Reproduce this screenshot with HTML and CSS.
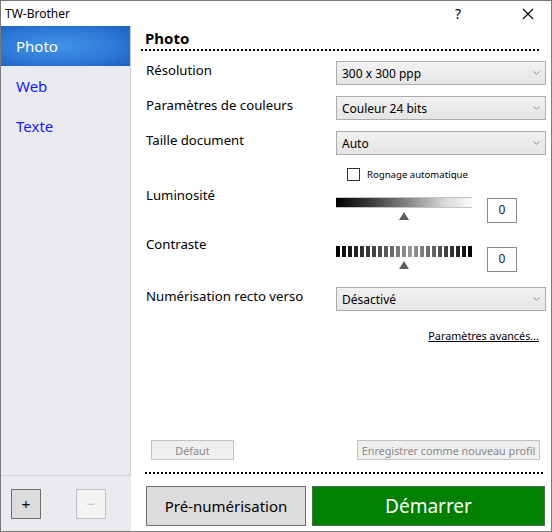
FILE: index.html
```html
<!DOCTYPE html>
<html lang="fr">
<head>
    <meta charset="UTF-8">
    <title>TW-Brother</title>
    <link rel="stylesheet" href="styles.css">
</head>
<body>

    <div class="window">
        <!-- Title bar -->
        <div class="titlebar">
            <span class="title">TW-Brother</span>
            <span class="help">?</span>
            <span class="close">
                <svg width="12" height="12" viewBox="0 0 12 12"><path d="M1 1L11 11M11 1L1 11" stroke="#000" stroke-width="1.1" fill="none"/></svg>
            </span>
        </div>

        <div class="frame">
            <!-- Profiles list -->
            <aside class="sidebar">
                <ul class="nav">
                    <li class="active">Photo</li>
                    <li>Web</li>
                    <li>Texte</li>
                </ul>
                <div class="sidebar-foot">
                    <button class="sq">+</button>
                    <button class="sq" disabled>&minus;</button>
                </div>
            </aside>

            <!-- Settings -->
            <main class="main">
                <h2 class="heading">Photo</h2>

                <div class="row first">
                    <span class="label">Résolution</span>
                    <div class="select"><span>300 x 300 ppp</span><svg class="chev" width="7" height="4" viewBox="0 0 7 4"><path d="M0.5 0.5L3.5 3.2L6.5 0.5" stroke="#888" fill="none"/></svg></div>
                </div>
                <div class="row">
                    <span class="label">Paramètres de couleurs</span>
                    <div class="select"><span>Couleur 24 bits</span><svg class="chev" width="7" height="4" viewBox="0 0 7 4"><path d="M0.5 0.5L3.5 3.2L6.5 0.5" stroke="#888" fill="none"/></svg></div>
                </div>
                <div class="row">
                    <span class="label">Taille document</span>
                    <div class="select"><span>Auto</span><svg class="chev" width="7" height="4" viewBox="0 0 7 4"><path d="M0.5 0.5L3.5 3.2L6.5 0.5" stroke="#888" fill="none"/></svg></div>
                </div>

                <div class="check-row">
                    <span class="checkbox"></span>
                    <span>Rognage automatique</span>
                </div>

                <div class="row slider-row lum">
                    <span class="label">Luminosité</span>
                    <div class="slider">
                        <div class="bar bright"></div>
                        <div class="thumb"></div>
                    </div>
                    <div class="value">0</div>
                </div>
                <div class="row slider-row contrast">
                    <span class="label">Contraste</span>
                    <div class="slider">
                        <div class="bar striped"></div>
                        <div class="thumb"></div>
                    </div>
                    <div class="value">0</div>
                </div>

                <div class="row recto">
                    <span class="label">Numérisation recto verso</span>
                    <div class="select"><span>Désactivé</span><svg class="chev" width="7" height="4" viewBox="0 0 7 4"><path d="M0.5 0.5L3.5 3.2L6.5 0.5" stroke="#888" fill="none"/></svg></div>
                </div>

                <a class="advanced" href="#">Paramètres avancés...</a>

                <div class="spacer"></div>

                <div class="actions">
                    <button class="small default" disabled>Défaut</button>
                    <button class="small save" disabled>Enregistrer comme nouveau profil</button>
                </div>

                <div class="dots bottom-dots"></div>

                <div class="scan-buttons">
                    <button class="prescan">Pré-numérisation</button>
                    <button class="start">Démarrer</button>
                </div>
            </main>
        </div>
    </div>

</body>
</html>
```

FILE: styles.css
```css
* {
    box-sizing: border-box;
}

body {
    margin: 0;
    font-family: "Noto Sans", "Open Sans", sans-serif;
    color: #000;
    background: #fff;
}

.window {
    width: 552px;
    height: 532px;
    border: 1px solid #7a7a7a;
    display: flex;
    flex-direction: column;
    background: #fff;
}

/* Title bar */
.titlebar {
    height: 25px;
    display: flex;
    align-items: center;
    padding-left: 4px;
    font-size: 12px;
}

.title {
    flex: 1;
}

.help {
    width: 20px;
    text-align: center;
    font-size: 14px;
}

.close {
    width: 20px;
    height: 20px;
    margin-left: 50px;
    margin-right: 13px;
    display: flex;
    align-items: center;
    justify-content: center;
}

.frame {
    flex: 1;
    display: flex;
}

/* Sidebar */
.sidebar {
    width: 130px;
    background: #e9ebee;
    display: flex;
    flex-direction: column;
}

.nav {
    flex: 1;
    margin: 0;
    padding: 0;
    list-style: none;
    border-right: 1px solid #cfd0d2;
    border-bottom: 1px solid #cfd0d2;
}

.nav li {
    height: 40px;
    line-height: 41px;
    padding-left: 15px;
    font-size: 15px;
    color: #1a1aff;
}

.nav li.active {
    color: #fff;
    background: radial-gradient(ellipse at 45% 50%, #4293e6 0%, #2f7bd8 55%, #1d5fc4 100%);
}

.sidebar-foot {
    height: 55px;
    display: flex;
    gap: 35px;
    padding: 13px 0 0 10px;
}

.sq {
    width: 30px;
    height: 30px;
    padding: 0;
    border: 1px solid #707070;
    background: #dcdcdc;
    font-family: "Liberation Sans", sans-serif;
    font-size: 15px;
    line-height: 26px;
    color: #000;
}

.sq:disabled {
    border-color: #bfbfbf;
    background: #f4f4f4;
    color: #c4c4c4;
}

/* Main panel */
.main {
    flex: 1;
    display: flex;
    flex-direction: column;
    padding-bottom: 5px;
}

.heading {
    margin: 2px 12px 0 10px;
    padding-left: 4px;
    font-size: 15px;
    line-height: 20px;
    font-weight: bold;
    background: repeating-linear-gradient(90deg, #000 0 2px, transparent 2px 4px) left bottom / 100% 2px no-repeat;
    height: 23px;
}

.row {
    display: flex;
    align-items: flex-start;
    margin: 11px 0 0 15px;
}

.row.first {
    margin-top: 10px;
}

.label {
    width: 190px;
    font-size: 13.2px;
    line-height: 18px;
}

.select {
    width: 210px;
    height: 24px;
    border: 1px solid #acacac;
    background: linear-gradient(#f2f2f2, #e5e5e5);
    display: flex;
    align-items: center;
    padding-left: 5px;
    font-size: 12px;
}

.chev {
    margin-left: auto;
    margin-right: 5px;
}

.check-row {
    display: flex;
    align-items: center;
    margin: 12px 0 0 216px;
    font-size: 9.6px;
    height: 14px;
}

.checkbox {
    width: 13px;
    height: 13px;
    border: 1px solid #333;
    background: #fff;
    margin-right: 7px;
}

.slider-row {
    height: 40px;
}

.slider-row .label {
    margin-top: -1px;
}

.slider-row.lum {
    margin-top: 6px;
}

.slider-row.contrast {
    margin-top: 9px;
}

.slider {
    width: 136px;
    margin-top: 10px;
}

.bar {
    height: 11px;
}

.bar.bright {
    border-top: 1px solid #c4c4c4;
    border-bottom: 1px solid #c4c4c4;
    background: linear-gradient(90deg, #000 0%, #3a3a3a 25%, #8c8c8c 55%, #d9d9d9 80%, #fafafa 100%);
}

.bar.striped {
    background:
        repeating-linear-gradient(90deg, transparent 0 4px, #fff 4px 6px),
        linear-gradient(90deg, #000 0%, #555 35%, #9a9a9a 55%, #444 80%, #000 100%);
}

.thumb {
    width: 0;
    height: 0;
    margin: 4px auto 0;
    border-left: 5px solid transparent;
    border-right: 5px solid transparent;
    border-bottom: 8px solid #5e5e5e;
}

.value {
    width: 30px;
    height: 25px;
    margin: 11px 0 0 15px;
    border: 1px solid #8a8a8a;
    text-align: center;
    font-size: 12px;
    line-height: 22px;
    color: #102040;
}

.row.recto {
    margin-top: 11px;
}

.advanced {
    align-self: flex-end;
    margin: 17px 12px 0 0;
    font-size: 10.8px;
    line-height: 16px;
    color: #000;
    text-decoration: underline;
}

.spacer {
    flex: 1;
}

/* Bottom buttons */
.actions {
    display: flex;
    justify-content: space-between;
    margin: 0 11px 0 20px;
}

.small {
    height: 20px;
    padding: 0;
    border: 1px solid #c2c2c2;
    background: #efefef;
    font-family: "Noto Sans", sans-serif;
    font-size: 10.8px;
    color: #8a8a8a;
    white-space: nowrap;
}

.small.default {
    width: 83px;
}

.small.save {
    width: 183px;
}

.dots {
    height: 2px;
    background: repeating-linear-gradient(90deg, #000 0 2px, transparent 2px 4px);
}

.bottom-dots {
    margin: 12px 7px 0 14px;
}

.scan-buttons {
    display: flex;
    gap: 6px;
    margin: 12px 6px 0 15px;
}

.prescan {
    width: 160px;
    height: 40px;
    border: 1px solid #707070;
    background: #dcdcdc;
    font-family: "Noto Sans", sans-serif;
    font-size: 15px;
    color: #000;
}

.start {
    flex: 1;
    height: 40px;
    border: 1px solid #4d6e4d;
    background: #008000;
    font-family: "Noto Sans", sans-serif;
    font-size: 19px;
    color: #fff;
}
```
